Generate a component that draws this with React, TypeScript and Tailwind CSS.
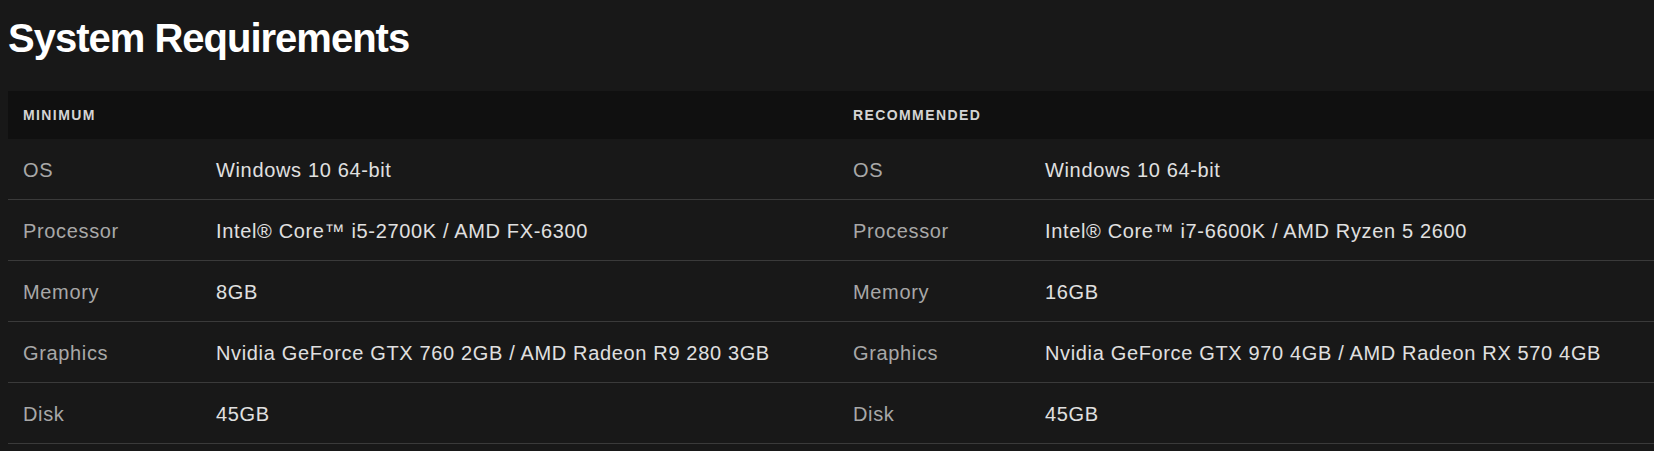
const specs = [
  {
    label: "OS",
    min: "Windows 10 64-bit",
    rec: "Windows 10 64-bit",
  },
  {
    label: "Processor",
    min: "Intel® Core™ i5-2700K / AMD FX-6300",
    rec: "Intel® Core™ i7-6600K / AMD Ryzen 5 2600",
  },
  {
    label: "Memory",
    min: "8GB",
    rec: "16GB",
  },
  {
    label: "Graphics",
    min: "Nvidia GeForce GTX 760 2GB / AMD Radeon R9 280 3GB",
    rec: "Nvidia GeForce GTX 970 4GB / AMD Radeon RX 570 4GB",
  },
  {
    label: "Disk",
    min: "45GB",
    rec: "45GB",
  },
];

export default function App() {
  return (
    <div
      className="min-h-[451px] w-full overflow-hidden bg-[#181818] pl-2"
      style={{ fontFamily: '"Liberation Sans", Arial, sans-serif' }}
    >
      {/* Titel */}
      <h1 className="pt-[18px] text-[40px] font-bold leading-none tracking-[-1px] text-white">
        System Requirements
      </h1>

      <div className="mt-[33px] w-[1660px]">
        {/* Kopfzeile */}
        <div className="flex h-12 items-center bg-[#101010] pt-px text-[14px] font-bold uppercase tracking-[1.4px] text-[#d4d4d4]">
          <div className="w-[830px] pl-[15px]">Minimum</div>
          <div className="w-[830px] pl-[15px]">Recommended</div>
        </div>

        {/* Zeilen */}
        {specs.map((row) => (
          <div
            key={row.label}
            className="flex h-[61px] items-center border-b border-[#3a3a3a] pt-[2px] text-[20px] tracking-[0.65px]"
          >
            <div className="flex w-[830px] pl-[15px]">
              <span className="w-[193px] shrink-0 text-[#a8a8a8]">{row.label}</span>
              <span className="text-[#e0e0e0]">{row.min}</span>
            </div>
            <div className="flex w-[830px] pl-[15px]">
              <span className="w-[192px] shrink-0 text-[#a8a8a8]">{row.label}</span>
              <span className="text-[#e0e0e0]">{row.rec}</span>
            </div>
          </div>
        ))}
      </div>
    </div>
  );
}
